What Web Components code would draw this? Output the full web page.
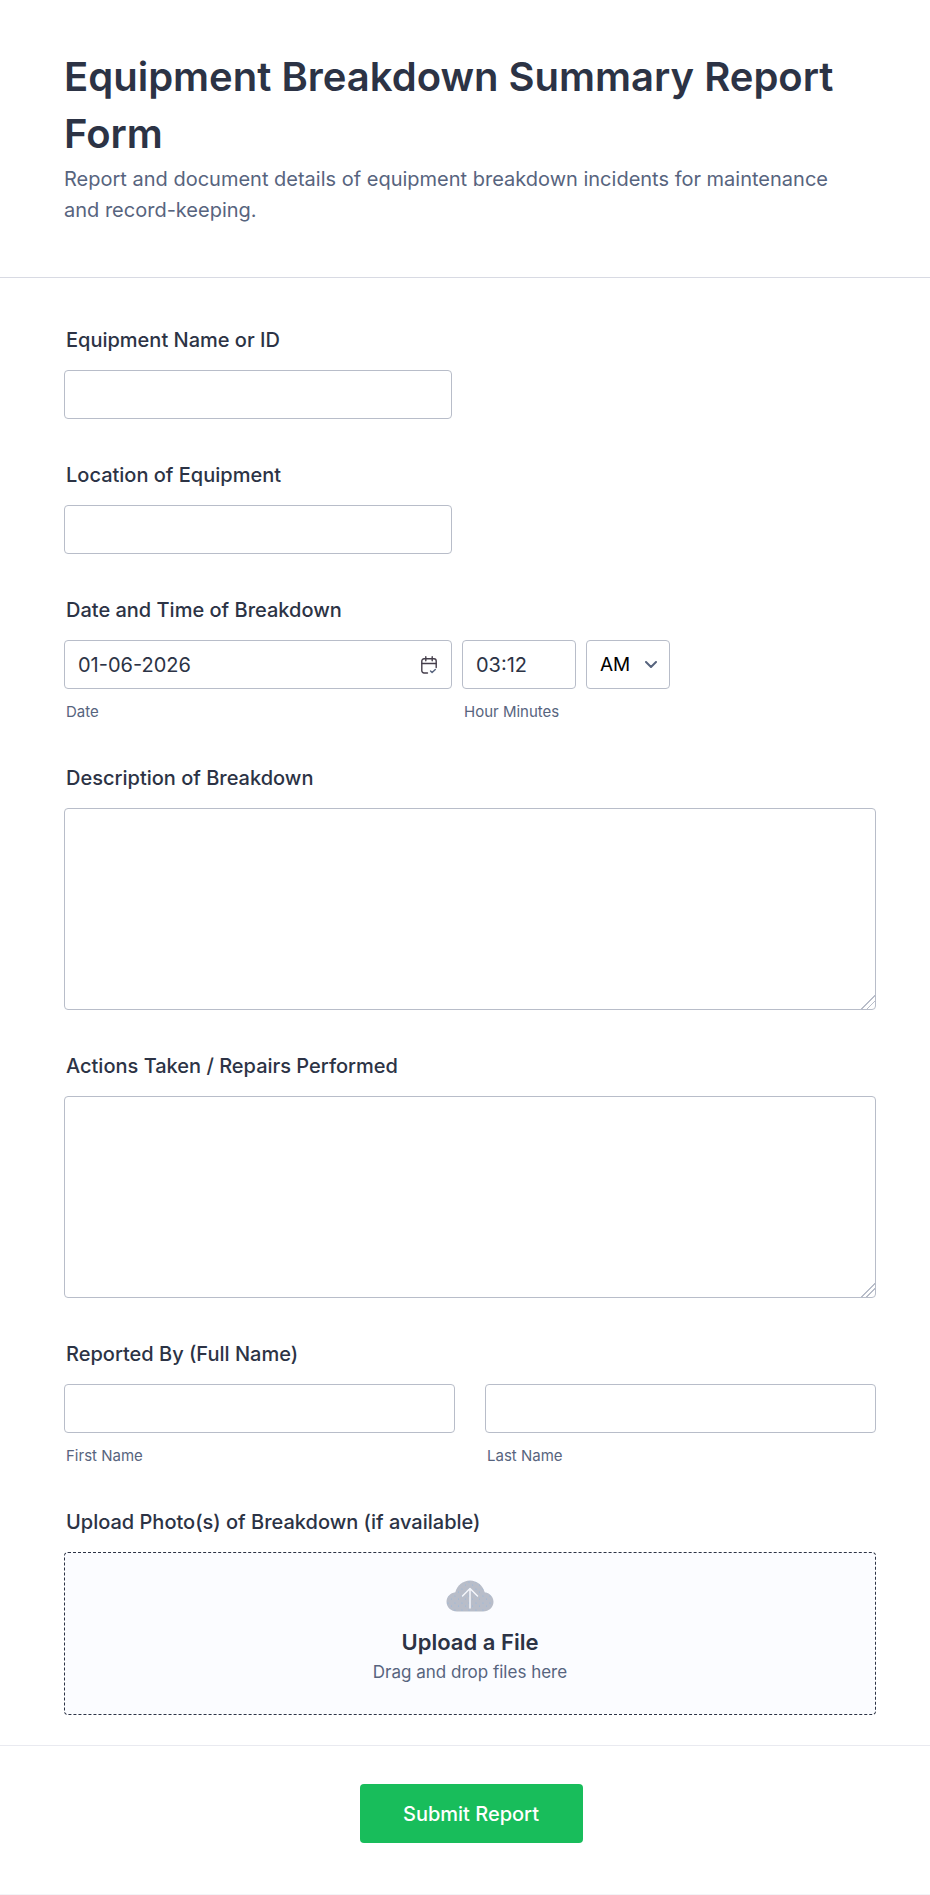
<!DOCTYPE html>
<html lang="en"><head><meta charset="utf-8"><title>Equipment Breakdown Summary Report Form</title>
<style>
html,body{margin:0;background:#fff}
body{font-family:Inter,"Liberation Sans",sans-serif;color:#2c3345}
</style></head><body>
<report-form>
  <form-header slot="header" title="Equipment Breakdown Summary Report Form" subtitle="Report and document details of equipment breakdown incidents for maintenance and record-keeping."></form-header>
  <form-field label="Equipment Name or ID"><text-box style="width:388px"></text-box></form-field>
  <form-field label="Location of Equipment"><text-box style="width:388px"></text-box></form-field>
  <form-field label="Date and Time of Breakdown">
    <field-row>
      <labelled-box sub="Date" style="width:388px"><text-box value="01-06-2026" icon="calendar"></text-box></labelled-box>
      <labelled-box sub="Hour Minutes" style="width:114px"><text-box value="03:12"></text-box></labelled-box>
      <labelled-box style="width:84px"><text-box value="AM" icon="chevron" dark></text-box></labelled-box>
    </field-row>
  </form-field>
  <form-field label="Description of Breakdown"><area-box></area-box></form-field>
  <form-field label="Actions Taken / Repairs Performed"><area-box></area-box></form-field>
  <form-field label="Reported By (Full Name)">
    <field-row gap="30">
      <labelled-box sub="First Name" style="flex:1"><text-box></text-box></labelled-box>
      <labelled-box sub="Last Name" style="flex:1"><text-box></text-box></labelled-box>
    </field-row>
  </form-field>
  <form-field label="Upload Photo(s) of Breakdown (if available)"><upload-zone></upload-zone></form-field>
  <form-footer slot="footer"><submit-button>Submit Report</submit-button></form-footer>
</report-form>
<script>
function def(name, css, html){
  customElements.define(name, class extends HTMLElement{
    connectedCallback(){
      if(this.shadowRoot) return;
      const r=this.attachShadow({mode:'open'});
      r.innerHTML='<style>'+css+'</style>'+(typeof html==='function'?html(this):html);
    }
  });
}
const attr=(e,n)=>(e.getAttribute(n)||'').replace(/&/g,'&amp;').replace(/</g,'&lt;');
const ICONS={
 calendar:'<svg width="16" height="18" viewBox="0 0 16 18" fill="none" stroke="#453e4b" stroke-width="1.4" stroke-linecap="round" stroke-linejoin="round"><path d="M6.500 17H3a2.200 2.200 0 0 1-2.200-2.200V5A2.200 2.200 0 0 1 3 2.800h10A2.200 2.200 0 0 1 15.200 5v6.500"/><path d="M1 7.500h14M4.800 .8v4M11.200 .8v4"/><path d="M9.500 15l1.600 1.600 3.200-3.200" stroke="#57647e"/></svg>',
 chevron:'<svg width="12" height="7" viewBox="0 0 12 7" fill="none" stroke="#57647e" stroke-width="2" stroke-linecap="round" stroke-linejoin="round"><path d="M1 1l5 5 5-5"/></svg>'
};
def('report-form',':host{display:flex;flex-direction:column;min-height:1895px;box-sizing:border-box;border-bottom:1px solid #f3f3f7;background:#fff}main{display:flex;flex-direction:column;gap:42px;padding:48px 54px 30px 64px}',
 '<slot name="header"></slot><main><slot></slot></main><slot name="footer"></slot>');
def('form-header',':host{display:block;padding:48px 64px 51px;border-bottom:1px solid #d8dae3}h1{margin:0;font:600 40px/57px Inter,sans-serif;color:#2c3345}p{margin:0;font:400 20px/31px Inter,sans-serif;color:#57647e;padding-top:2px;max-width:802px}',
 e=>'<h1>'+attr(e,'title')+'</h1><p>'+attr(e,'subtitle')+'</p>');
def('form-field',':host{display:block}label{display:block;font:500 20px/29px Inter,sans-serif;color:#2c3345;padding-left:2px;margin-bottom:15px}',
 e=>'<label>'+attr(e,'label')+'</label><slot></slot>');
def('field-row',':host{display:flex;align-items:flex-start;gap:10px}', '<slot></slot>');
def('labelled-box',':host{display:block;box-sizing:border-box}span{display:block;font:400 15px/20px Inter,sans-serif;color:#57647e;padding:13px 0 0 2px}',
 e=>'<slot></slot>'+(e.hasAttribute('sub')?'<span>'+attr(e,'sub')+'</span>':''));
def('text-box',':host{display:flex;align-items:center;justify-content:space-between;box-sizing:border-box;height:49px;padding:0 14px 0 13px;border:1px solid #b8bdc9;border-radius:4px;background:#fff;font:400 20px/24px Inter,sans-serif;color:#2c3345}:host([dark]){color:#000;font-size:19px;padding-right:12px}svg{display:block;flex:none}',
 e=>'<span>'+attr(e,'value')+'</span>'+(ICONS[e.getAttribute('icon')]||''));
def('area-box',':host{display:block}textarea{display:block;box-sizing:border-box;width:100%;height:202px;margin:0;padding:12px;border:1px solid #b8bdc9;border-radius:4px;background:#fff;font:400 18px Inter,sans-serif;outline:0}textarea::-webkit-resizer{background:linear-gradient(135deg,transparent 52%,#b8bdc9 52%,#b8bdc9 58%,transparent 58%,transparent 70%,#b8bdc9 70%,#b8bdc9 76%,transparent 76%)}','<textarea aria-label="Details"></textarea>');
def('upload-zone',':host{display:flex;flex-direction:column;align-items:center;box-sizing:border-box;height:163px;padding-top:27px;border:1px dashed #2c3345;border-radius:4px;background:#fbfcff}svg{display:block}b{font:600 22px/32px Inter,sans-serif;color:#2c3345;margin-top:14px}span{font:400 17px/26px Inter,sans-serif;color:#57647e;margin-top:1px}',
 `<svg width="48" height="32" viewBox="0 0 48 32" aria-hidden="true"><defs><pattern id="d" width="7" height="7" patternUnits="userSpaceOnUse"><circle cx="2" cy="2" r=".6" fill="#8fb4e0"/><circle cx="5.500" cy="5" r=".5" fill="#8fb4e0"/></pattern><path id="c" d="M11 31.500C5 31.500.5 27.300.5 21.800c0-5 3.800-9 8.800-9.600C11.200 5.500 17 .5 24 .5c7 0 12.800 5 14.700 11.700 5 .6 8.800 4.600 8.800 9.600 0 5.500-4.500 9.700-10.500 9.700z"/></defs><use href="#c" fill="#b8bdc9"/><use href="#c" fill="url(#d)"/><path d="M24 28V9M16.500 16L24 8.500 31.500 16" fill="none" stroke="#f4f6fb" stroke-width="1.500" stroke-linecap="round" stroke-linejoin="round"/></svg><b>Upload a File</b><span>Drag and drop files here</span>`);
def('form-footer',':host{display:flex;justify-content:center;box-sizing:border-box;padding:38px 0 0 12px;border-top:1px solid #e9eaf0}','<slot></slot>');
def('submit-button',':host{display:flex;align-items:center;justify-content:center;box-sizing:border-box;width:223px;height:59px;border-radius:4px;background:#18bd5b;color:#fff;font:500 20px/24px Inter,sans-serif}','<slot></slot>');
document.querySelectorAll('field-row[gap]').forEach(r=>r.style.gap=r.getAttribute('gap')+'px');
</script>
</body></html>
